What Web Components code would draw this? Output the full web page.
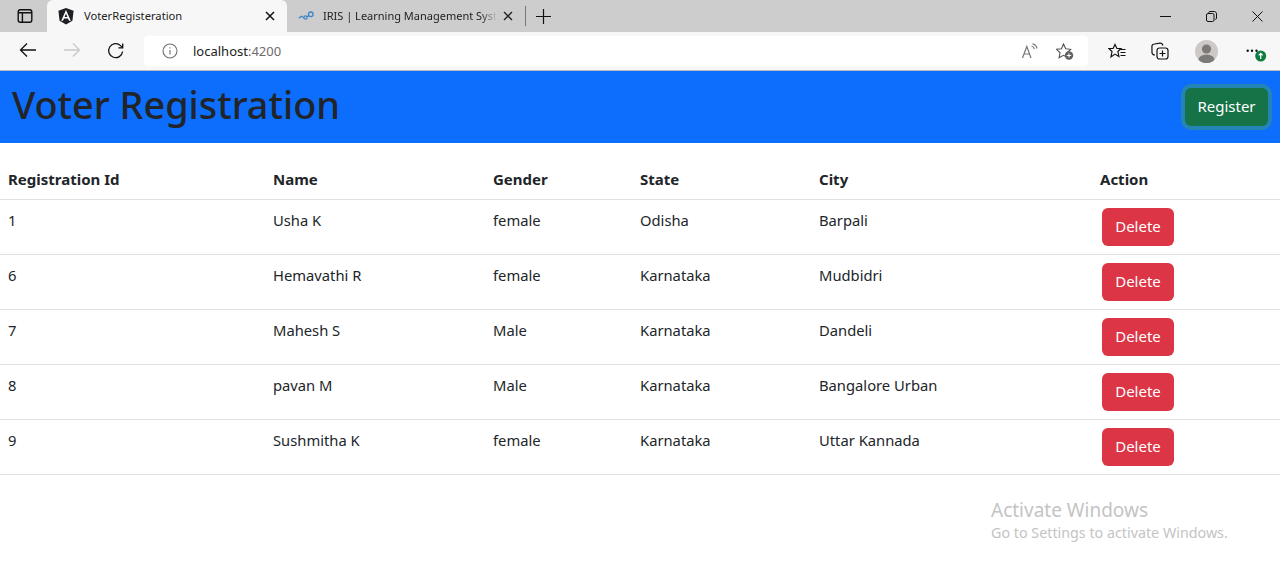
<!DOCTYPE html>
<html lang="en">
<head>
<meta charset="utf-8">
<title>VoterRegisteration</title>
<style>
  html, body { margin: 0; height: 100%; background: #fff; overflow: hidden; }
  body { display: flex; flex-direction: column; font-family: "Noto Sans", "Open Sans", sans-serif; color: #212529; }
</style>
</head>
<body>
<browser-chrome></browser-chrome>
<app-header heading="Voter Registration"><action-button variant="register">Register</action-button></app-header>
<voter-table></voter-table>
<activate-notice></activate-notice>

<script>
class BrowserChrome extends HTMLElement {
  constructor() {
    super();
    this.attachShadow({ mode: 'open' });
    this.shadowRoot.innerHTML = `
      <style>
        :host { display: block; flex: none; font-family: "Noto Sans", sans-serif; color: #222; }
        svg { display: block; flex: none; }
        .strip { height: 32px; background: #cdcdcd; display: flex; align-items: flex-end; }
        .panel { width: 47px; height: 32px; display: flex; align-items: center; justify-content: center; box-sizing: border-box; padding-left: 3px; }
        .tab { height: 32px; box-sizing: border-box; display: flex; align-items: center; font-size: 11.2px; white-space: nowrap; }
        .tab.active { width: 240px; background: #f7f7f7; border-radius: 6px 6px 0 0; padding: 0 12px 0 11px; }
        .tab.other { width: 238px; padding: 0 12px 0 11px; }
        .title { flex: 1; min-width: 0; padding: 0 0 2px 10px; }
        .other .title { font-size: 11px; padding-left: 9px; -webkit-mask-image: linear-gradient(to right, #000 88%, transparent 97%); mask-image: linear-gradient(to right, #000 88%, transparent 97%); }
        .sep { width: 1px; height: 20px; background: #777; margin-bottom: 6px; flex: none; }
        .plus { width: 35px; height: 32px; display: flex; align-items: center; justify-content: center; }
        .winbtns { margin-left: auto; display: flex; height: 32px; align-items: center; }
        .winbtns span { width: 46px; display: flex; justify-content: center; }
        .bar { height: 38px; background: #f7f7f7; display: flex; align-items: center; box-sizing: border-box; }
        .nav { display: flex; width: 144px; flex: none; padding-left: 10px; box-sizing: border-box; gap: 8px; }
        .nav span { width: 36px; display: flex; justify-content: center; }
        .address { width: 944px; height: 30px; background: #fff; border-radius: 4px; display: flex; align-items: center; box-sizing: border-box; padding: 0 14px 0 18px; font-size: 13px; }
        .url { padding-left: 15px; flex: 1; color: #222; }
        .url i { font-style: normal; color: #6d6d6d; }
        .address-icons { display: flex; gap: 18px; align-items: center; }
        .tools { flex: 1; display: flex; align-items: center; padding-left: 20px; }
        .avatar { width: 23px; height: 23px; border-radius: 50%; background: #cdc9c7; overflow: hidden; }
        .rule { height: 1px; background: #bcbcbc; }
      </style>
      <div class="strip">
        <div class="panel">
          <svg width="16" height="16" viewBox="0 0 16 16" fill="none" stroke="#111" stroke-width="1.4"><rect x="1.200" y="1.700" width="13.600" height="12.600" rx="2.200"/><path d="M1.200 4.800h13.600M5.400 4.800v9.500"/></svg>
        </div>
        <div class="tab active">
          <svg width="16" height="17" viewBox="0 0 16 17"><path fill="#1f1f23" d="M8 0 .4 2.800l1.200 10L8 16.600l6.400-3.800 1.200-10z"/><path fill="#fff" d="M8 2 3.200 12.800H5l1-2.400h4l1 2.400h1.800zM8 5.600l1.400 3.400H6.600z"/></svg>
          <span class="title">VoterRegisteration</span>
          <svg width="10" height="10" viewBox="0 0 10 10" fill="none" stroke="#111" stroke-width="1.500"><path d="M1 1l8 8M9 1l-8 8"/></svg>
        </div>
        <div class="tab other">
          <svg width="16" height="16" viewBox="0 0 16 16" fill="none" stroke="#3f86c6" stroke-width="1.300"><circle cx="12.800" cy="6.300" r="2.300"/><circle cx="7.500" cy="9.500" r="1.600"/><path d="M.8 10.200l2.400-2 2.800 1.500M9 8.800l1.900-1.200"/></svg>
          <span class="title">IRIS | Learning Management Syst</span>
          <svg width="10" height="10" viewBox="0 0 10 10" fill="none" stroke="#222" stroke-width="1.400"><path d="M1 1l8 8M9 1l-8 8"/></svg>
        </div>
        <div class="sep"></div>
        <div class="plus">
          <svg width="15" height="15" viewBox="0 0 15 15" stroke="#111" stroke-width="1.200"><path d="M7.500 0v15M0 7.500h15"/></svg>
        </div>
        <div class="winbtns">
          <span><svg width="11" height="11" viewBox="0 0 11 11" stroke="#111"><path d="M0 5.500h11"/></svg></span>
          <span><svg width="11" height="11" viewBox="0 0 11 11" fill="none" stroke="#111"><rect x=".5" y="2.500" width="7.500" height="8" rx="1.500"/><path d="M2.800 2.200V1.600c0-.7.500-1.100 1.100-1.100h4.300c1.300 0 2.300 1 2.300 2.300v4.400c0 .6-.4 1.100-1 1.100h-.4"/></svg></span>
          <span><svg width="11" height="11" viewBox="0 0 11 11" stroke="#111"><path d="M.5.5l10 10M10.500 .5l-10 10"/></svg></span>
        </div>
      </div>
      <div class="bar">
        <div class="nav">
          <span><svg width="18" height="16" viewBox="0 0 18 16" fill="none" stroke="#111" stroke-width="1.300"><path d="M17 8H1.500M8 1.500 1.500 8 8 14.500"/></svg></span>
          <span><svg width="18" height="16" viewBox="0 0 18 16" fill="none" stroke="#c9c9c9" stroke-width="1.300"><path d="M1 8h15.500M10 1.500 16.500 8 10 14.500"/></svg></span>
          <span><svg width="18" height="18" viewBox="0 0 18 18" fill="none" stroke="#111" stroke-width="1.300"><path d="M15.600 9.500A7 7 0 1 1 13.500 3.600L15.500 5.500"/><path d="M15.700 1.500v4.300h-4.300"/></svg></span>
        </div>
        <div class="address">
          <svg width="16" height="16" viewBox="0 0 16 16" fill="none" stroke="#6f6f6f" stroke-width="1.100"><circle cx="8" cy="8" r="7"/><path d="M8 7v4.500M8 4.300v1.200"/></svg>
          <span class="url">localhost<i>:4200</i></span>
          <div class="address-icons">
            <svg width="16" height="16" viewBox="0 0 16 16" fill="none" stroke="#777" stroke-width="1.200"><path d="M.5 15 4.800 3.500 9 15M1.900 11h5.800"/><path d="M9.500 3c1.500.3 2.500 1.300 2.900 3M10.500 .8c2.200.4 4 2.200 4.600 4.700"/></svg>
            <svg width="18" height="17" viewBox="0 0 18 17" fill="none"><path stroke="#555" stroke-width="1.100" d="M7.500 1l2.200 4.700 5 .6-3.600 3.500.9 5-4.500-2.500-4.400 2.500.9-5L.5 6.300l5-.6z"/><circle cx="13" cy="12.500" r="4.200" fill="#5f5f5f"/><path stroke="#fff" d="M13 10.300v4.400M10.800 12.500h4.400"/></svg>
          </div>
        </div>
        <div class="tools">
          <svg width="18" height="17" viewBox="0 0 18 17" fill="none" stroke="#111" stroke-width="1.200"><path d="M7 1.500l1.900 4h4l-3 3 1 5-3.900-2.400L3 14l1-5.500L.9 5.500h4.200z"/><path d="M12.500 6.500h5M12.500 9.500h5M12.500 12.500h5"/></svg>
          <svg style="margin-left:25px" width="18" height="18" viewBox="0 0 18 18" fill="none" stroke="#111" stroke-width="1.200"><path d="M4 13c-2 0-3-1-3-2.500L.9 4.500C.9 3 2 2 3.500 2L9 1.200c1.500-.2 2.600.8 3 2.300"/><rect x="6" y="6" width="11" height="11" rx="2.500"/><path d="M11.500 8.500v6M8.500 11.500h6"/></svg>
          <div class="avatar" style="margin-left:26px"><svg width="23" height="23" viewBox="0 0 23 23"><circle cx="11.500" cy="9" r="4.600" fill="#7d7977"/><ellipse cx="11.500" cy="20" rx="8" ry="5.500" fill="#7d7977"/></svg></div>
          <svg style="margin-left:27px" width="24" height="22" viewBox="0 0 24 22"><g fill="#111"><circle cx="2.700" cy="10.700" r="1.200"/><circle cx="7" cy="10.700" r="1.200"/><circle cx="11.500" cy="10.700" r="1.200"/></g><circle cx="15.700" cy="16" r="5.500" fill="#107c41"/><path stroke="#fff" stroke-width="1.200" fill="none" d="M15.700 19v-5.500M13.700 15.300l2-2 2 2"/></svg>
        </div>
      </div>
      <div class="rule"></div>
    `;
  }
}
customElements.define('browser-chrome', BrowserChrome);

class ActionButton extends HTMLElement {
  constructor() {
    super();
    this.attachShadow({ mode: 'open' });
    this.shadowRoot.innerHTML = `
      <style>
        :host { display: inline-block; }
        button {
          display: block; font: inherit; color: #fff; border: 1px solid transparent;
          border-radius: 6px; box-sizing: border-box; height: 38px; padding: 0 0 2px; cursor: pointer;
        }
        :host([variant="delete"]) button { width: 72px; background: #dc3545; font-size: 15px; }
        :host([variant="register"]) button {
          width: 83px; background: #157347; box-shadow: 0 0 0 4px rgba(60,153,110,.5);
        }
      </style>
      <button><slot></slot></button>
    `;
  }
}
customElements.define('action-button', ActionButton);

class AppHeader extends HTMLElement {
  constructor() {
    super();
    this.attachShadow({ mode: 'open' });
    this.shadowRoot.innerHTML = `
      <style>
        :host {
          display: flex; flex: none; align-items: center; justify-content: space-between;
          height: 72px; background: #0d6efd; padding: 0 12px; box-sizing: border-box;
          font-size: 15px;
        }
        h1 { margin: 0 0 4px; font-size: 37.800px; font-weight: 500; line-height: 1.2; color: #212529; }
      </style>
      <h1></h1>
      <slot></slot>
    `;
    this.shadowRoot.querySelector('h1').textContent = this.getAttribute('heading');
  }
}
customElements.define('app-header', AppHeader);

class VoterRow extends HTMLElement {
  constructor() {
    super();
    this.attachShadow({ mode: 'open' });
    this.shadowRoot.innerHTML = `
      <style>
        :host {
          display: grid; grid-template-columns: 265px 220px 147px 179px 281px 1fr;
          height: 55px; box-sizing: border-box; border-bottom: 1px solid #dee2e6;
          font-size: 14.750px; color: #212529;
        }
        :host([head]) { height: 37px; font-weight: 700; font-size: 15px; }
        div { padding: 8px; line-height: 24px; }
        .action { padding: 8px 10px; }
        :host([head]) div { padding: 0 8px; line-height: 32px; white-space: nowrap; }
      </style>
    `;
  }
  render(cells, head) {
    cells.forEach(text => {
      const cell = document.createElement('div');
      cell.textContent = text;
      this.shadowRoot.appendChild(cell);
    });
    const action = document.createElement('div');
    action.className = 'action';
    if (head) {
      action.textContent = 'Action';
    } else {
      const btn = document.createElement('action-button');
      btn.setAttribute('variant', 'delete');
      btn.textContent = 'Delete';
      action.appendChild(btn);
    }
    this.shadowRoot.appendChild(action);
  }
}
customElements.define('voter-row', VoterRow);

class VoterTable extends HTMLElement {
  constructor() {
    super();
    this.attachShadow({ mode: 'open' });
    this.shadowRoot.innerHTML = `
      <style>
        :host { display: block; padding-top: 20px; background: #fff; }
      </style>
    `;
    const voters = [
      ['1', 'Usha K', 'female', 'Odisha', 'Barpali'],
      ['6', 'Hemavathi R', 'female', 'Karnataka', 'Mudbidri'],
      ['7', 'Mahesh S', 'Male', 'Karnataka', 'Dandeli'],
      ['8', 'pavan M', 'Male', 'Karnataka', 'Bangalore Urban'],
      ['9', 'Sushmitha K', 'female', 'Karnataka', 'Uttar Kannada']
    ];
    const head = document.createElement('voter-row');
    head.setAttribute('head', '');
    head.render(['Registration Id', 'Name', 'Gender', 'State', 'City'], true);
    this.shadowRoot.appendChild(head);
    voters.forEach(v => {
      const row = document.createElement('voter-row');
      row.render(v, false);
      this.shadowRoot.appendChild(row);
    });
  }
}
customElements.define('voter-table', VoterTable);

class ActivateNotice extends HTMLElement {
  constructor() {
    super();
    this.attachShadow({ mode: 'open' });
    this.shadowRoot.innerHTML = `
      <style>
        :host { position: absolute; left: 991px; top: 498px; color: #c4c4c4; font-family: "Noto Sans", sans-serif; }
        .big { font-size: 19px; line-height: 24px; }
        .small { font-size: 14.300px; line-height: 22px; }
      </style>
      <div class="big">Activate Windows</div>
      <div class="small">Go to Settings to activate Windows.</div>
    `;
  }
}
customElements.define('activate-notice', ActivateNotice);
</script>
</body>
</html>
